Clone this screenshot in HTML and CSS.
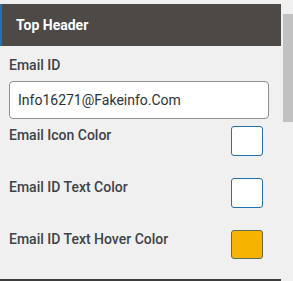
FILE: index.html
```html
<!DOCTYPE html>
<html lang="en">
<head>
  <meta charset="UTF-8">
  <title>Top Header</title>
  <link rel="stylesheet" href="styles.css">
</head>
<body>
  <div class="wrap">
    <div class="panel">
      <div class="panel-head">Top Header</div>
      <div class="panel-body">
        <label class="field-label">Email ID</label>
        <input class="text-input" type="text" value="Info16271@Fakeinfo.Com">

        <div class="color-row">
          <span class="field-label">Email Icon Color</span>
          <span class="swatch"></span>
        </div>
        <div class="color-row">
          <span class="field-label">Email ID Text Color</span>
          <span class="swatch"></span>
        </div>
        <div class="color-row">
          <span class="field-label">Email ID Text Hover Color</span>
          <span class="swatch swatch-yellow"></span>
        </div>
      </div>
    </div>
    <div class="scroll-track"><div class="scroll-thumb"></div></div>
  </div>
</body>
</html>
```

FILE: styles.css
```css
* { box-sizing: border-box; margin: 0; padding: 0; }
body {
  background: #f0f0f0;
  font-family: Roboto, "Liberation Sans", sans-serif;
  width: 293px;
  height: 281px;
  overflow: hidden;
}
.wrap {
  display: flex;
  gap: 2px;
  height: 281px;
}
.panel {
  width: 281px;
  margin-top: 4px;
  border-bottom: 2px solid #3c3c3c;
  display: flex;
  flex-direction: column;
}
.panel-head {
  height: 42px;
  background: #4d4947;
  border-left: 2px solid #2271b1;
  color: #fff;
  font-weight: 700;
  font-size: 14px;
  line-height: 42px;
  padding-left: 14px;
  flex-shrink: 0;
}
.panel-body {
  flex: 1;
  padding: 9px 18px 0 9px;
}
.field-label {
  display: block;
  font-size: 14px;
  font-weight: 500;
  line-height: 20px;
  color: #3c434a;
}
.text-input {
  display: block;
  width: 260px;
  height: 38px;
  margin-top: 6px;
  padding: 0 8px;
  border: 1px solid #8c8f94;
  border-radius: 4px;
  background: #fff;
  font-family: Roboto, "Liberation Sans", sans-serif;
  font-size: 14px;
  color: #2c3338;
}
.color-row {
  display: flex;
  justify-content: space-between;
  align-items: flex-start;
  height: 52px;
  padding-top: 4px;
  margin-top: 3px;
}
.color-row + .color-row { margin-top: 0; }
.color-row .field-label { margin-top: -1px; }
.swatch {
  width: 32px;
  height: 30px;
  border: 1px solid #2271b1;
  border-radius: 3px;
  background: #fff;
}
.swatch-yellow {
  background: #f4b400;
  border-color: #5f6b52;
  height: 29px;
}
.scroll-track {
  width: 10px;
  padding-top: 14px;
}
.scroll-thumb {
  height: 108px;
  background: #c1c1c1;
}
```
